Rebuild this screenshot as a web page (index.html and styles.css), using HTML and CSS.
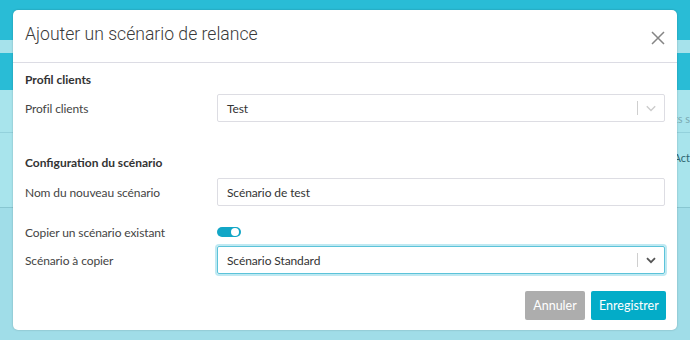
FILE: index.html
```html
<!DOCTYPE html>
<html lang="fr">
<head>
<meta charset="utf-8">
<title>Ajouter un scénario de relance</title>
<link rel="stylesheet" href="styles.css">
</head>
<body>
<div class="page">
  <div class="topbar"></div>
  <div class="strip"></div>
  <div class="navbar"></div>
  <div class="row row-a"><span class="bgtext">Clients s</span></div>
  <div class="row row-b"><span class="bgtext">Act</span></div>
  <div class="row row-c"></div>
</div>

<div class="modal">
  <div class="modal-header">
    <h1 class="modal-title">Ajouter un scénario de relance</h1>
    <button class="close" type="button" aria-label="Fermer">
      <svg width="14" height="14" viewBox="0 0 14 14"><path d="M1 1 L13 13 M13 1 L1 13" stroke="#858585" stroke-width="1.5" fill="none"/></svg>
    </button>
  </div>
  <div class="modal-body">
    <div class="section-title">Profil clients</div>
    <div class="field">
      <label class="label">Profil clients</label>
      <div class="select">
        <span class="value">Test</span>
        <span class="sep"></span>
        <svg class="chev" width="10" height="7" viewBox="0 0 10 7"><path d="M0.8 1.2 L5 5.4 L9.2 1.2" stroke="#cccccc" stroke-width="1.4" fill="none"/></svg>
      </div>
    </div>

    <div class="section-title second">Configuration du scénario</div>
    <div class="field field-input">
      <label class="label">Nom du nouveau scénario</label>
      <div class="input">Scénario de test</div>
    </div>
    <div class="field toggle-field">
      <label class="label">Copier un scénario existant</label>
      <span class="toggle"><span class="knob"></span></span>
    </div>
    <div class="field">
      <label class="label">Scénario à copier</label>
      <div class="select focus">
        <span class="value">Scénario Standard</span>
        <span class="sep"></span>
        <svg class="chev" width="10" height="7" viewBox="0 0 10 7"><path d="M1 1.2 L5 5.2 L9 1.2" stroke="#555555" stroke-width="1.8" fill="none"/></svg>
      </div>
    </div>
  </div>
  <div class="modal-footer">
    <button class="btn btn-grey" type="button">Annuler</button>
    <button class="btn btn-primary" type="button">Enregistrer</button>
  </div>
</div>
</body>
</html>
```
FILE: styles.css
```css
html, body {
  margin: 0;
  padding: 0;
}
body {
  width: 690px;
  height: 340px;
  overflow: hidden;
  position: relative;
  font-family: "Lato", "Open Sans", sans-serif;
  background: #a0dde8;
}
.page {
  display: flex;
  flex-direction: column;
}
.topbar { height: 40px; background: #29bcd6; }
.strip { height: 13px; background: #a6e2eb; }
.navbar { height: 37px; background: #29bcd6; }
.row {
  background: #a8e4ec;
  display: flex;
  justify-content: flex-end;
}
.row-a { height: 42px; border-bottom: 1px solid #93d1dc; align-items: flex-end; }
.row-b { height: 74px; border-bottom: 1px solid #88c6d1; }
.row-c { height: 132px; background: #a0dde8; }
.bgtext {
  font-family: "Lato", sans-serif;
  font-size: 11px;
  white-space: nowrap;
}
.row-a .bgtext { margin-bottom: 7px; color: #7aaab2; }
.row-b .bgtext { margin-top: 18px; color: #2f6670; }

.modal {
  position: absolute;
  left: 13px;
  top: 10px;
  width: 664px;
  height: 320px;
  background: #fff;
  border-radius: 5px;
  box-shadow: 0 0 2px rgba(0,0,0,0.25);
  display: flex;
  flex-direction: column;
  color: #333;
}
.modal-header {
  height: 52px;
  border-bottom: 1px solid #dcdce4;
  display: flex;
  align-items: center;
  justify-content: space-between;
  padding: 0 11px 0 12px;
}
.modal-title {
  margin: 0;
  font-family: "Roboto", sans-serif;
  font-weight: 300;
  font-size: 17.6px;
  color: #3a3a3a;
  position: relative;
  top: -2px;
}
.close {
  border: 0;
  background: none;
  padding: 0;
  width: 16px;
  height: 16px;
  display: flex;
  align-items: center;
  justify-content: center;
  position: relative;
  top: 2px;
}
.modal-body {
  padding: 8px 12px 0 12px;
  display: flex;
  flex-direction: column;
}
.section-title {
  font-weight: 700;
  font-size: 12px;
  color: #333;
  height: 18px;
  line-height: 18px;
  margin-bottom: 5px;
}
.section-title.second {
  margin-top: 32px;
  margin-bottom: 6px;
}
.field {
  display: flex;
  align-items: center;
  height: 28px;
}
.field-input { margin-bottom: 16px; }
.label {
  width: 192px;
  flex: none;
  font-size: 12px;
  color: #444;
  letter-spacing: -0.1px;
}
.select, .input {
  flex: 1;
  height: 28px;
  box-sizing: border-box;
  border: 1px solid #dddde3;
  border-radius: 2px;
  display: flex;
  align-items: center;
  padding-left: 9px;
  font-size: 12px;
  letter-spacing: -0.1px;
  color: #333;
}
.select .value { flex: 1; }
.select .sep {
  width: 1px;
  height: 14px;
  background: #cfcfcf;
  margin-right: 8px;
}
.select .chev { margin-right: 8px; }
.select.focus {
  border-color: #5cc3d9;
  box-shadow: 0 0 0 2px #bfe9f2;
}
.toggle-field {
  height: 20px;
  margin-bottom: 4px;
}
.toggle {
  width: 24px;
  height: 10px;
  border-radius: 5px;
  background: #12a6c6;
  position: relative;
  display: inline-block;
}
.knob {
  position: absolute;
  right: 2px;
  top: 1px;
  width: 8px;
  height: 8px;
  border-radius: 50%;
  background: #fff;
}
.modal-footer {
  margin-top: auto;
  display: flex;
  justify-content: flex-end;
  gap: 6px;
  padding: 0 11px 10px 0;
}
.btn {
  height: 29px;
  border: 0;
  border-radius: 2px;
  color: #fff;
  font-family: "Lato", sans-serif;
  font-size: 12.5px;
  padding: 0 8px;
}
.btn-grey { background: #adadad; width: 60px; }
.btn-primary { background: #03acc8; width: 75px; }
```
